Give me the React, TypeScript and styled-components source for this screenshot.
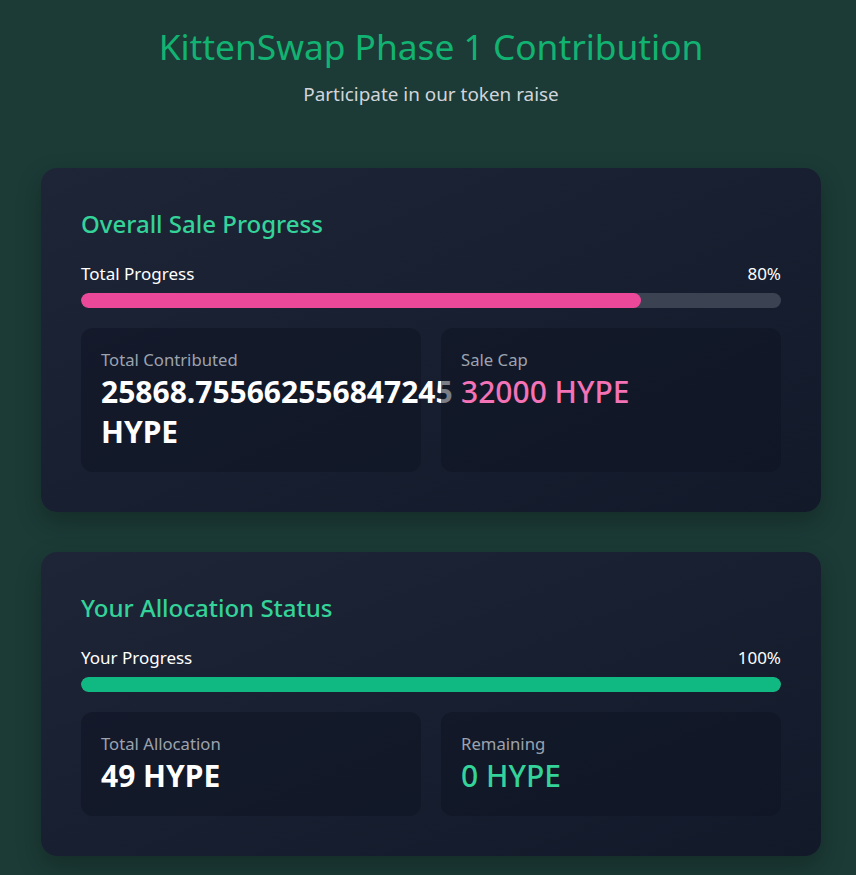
import React from "react";
import styled, { createGlobalStyle } from "styled-components";

const Global = createGlobalStyle`
  html, body { margin: 0; padding: 0; background: #1c3b36; }
  body { font-family: "Noto Sans", "Open Sans", sans-serif; color: #fff; }
  * { box-sizing: border-box; }
`;

const Page = styled.main`
  min-height: 875px;
  padding: 26px 35px 40px 41px;
`;

const Container = styled.div`
  width: 780px;
  display: flex;
  flex-direction: column;
`;

const Header = styled.header`
  text-align: center;
  margin-bottom: 60px;
`;

const Title = styled.h1`
  margin: 0 0 14px;
  font-size: 35.3px;
  line-height: 40px;
  font-weight: 400;
  color: #12b372;
`;

const Subtitle = styled.p`
  margin: 0;
  font-size: 18.9px;
  line-height: 28px;
  color: #d1d5db;
`;

const Cards = styled.div`
  display: flex;
  flex-direction: column;
  gap: 40px;
`;

const Card = styled.section`
  padding: 40px;
  border-radius: 16px;
  background: linear-gradient(to bottom right, #1e2537, #121929);
  box-shadow: 0 10px 25px rgba(0, 0, 0, 0.25);
`;

const CardTitle = styled.h2`
  margin: 0 0 20px;
  font-size: 24px;
  line-height: 32px;
  font-weight: 500;
  color: #34d399;
`;

const ProgressHead = styled.div`
  display: flex;
  justify-content: space-between;
  font-size: 17px;
  line-height: 28px;
  color: #fff;
  margin-bottom: 5px;
`;

const Track = styled.div`
  height: 15px;
  border-radius: 999px;
  background: #3b4252;
  overflow: hidden;
  margin-bottom: 20px;
`;

const Fill = styled.div<{ $color: string }>`
  height: 100%;
  border-radius: 999px;
  background: ${(p) => p.$color};
`;

const Stats = styled.div`
  display: grid;
  grid-template-columns: 1fr 1fr;
  gap: 20px;
`;

const StatBox = styled.div`
  padding: 20px;
  border-radius: 12px;
  background: rgba(15, 20, 34, 0.55);
  min-width: 0;
`;

const StatLabel = styled.div`
  font-size: 16.7px;
  line-height: 24px;
  color: #9ca3af;
`;

const StatValue = styled.div<{ $color: string }>`
  font-size: 30px;
  line-height: 40px;
  font-weight: 700;
  color: ${(p) => p.$color};
`;

const StatValueLight = styled(StatValue)`
  font-weight: 500;
`;

export default function App() {
  const progress = 80;
  return (
    <>
      <Global />
      <Page>
        <Container>
          <Header>
            <Title>KittenSwap Phase 1 Contribution</Title>
            <Subtitle>Participate in our token raise</Subtitle>
          </Header>
          <Cards>
            <Card>
              <CardTitle>Overall Sale Progress</CardTitle>
              <ProgressHead>
                <span>Total Progress</span>
                <span>{progress}%</span>
              </ProgressHead>
              <Track>
                <Fill $color="#ec4899" style={{ width: `${progress}%` }} />
              </Track>
              <Stats>
                <StatBox>
                  <StatLabel>Total Contributed</StatLabel>
                  <StatValue $color="#ffffff">25868.755662556847245 HYPE</StatValue>
                </StatBox>
                <StatBox>
                  <StatLabel>Sale Cap</StatLabel>
                  <StatValueLight $color="#f472b6">32000 HYPE</StatValueLight>
                </StatBox>
              </Stats>
            </Card>
            <Card>
              <CardTitle>Your Allocation Status</CardTitle>
              <ProgressHead>
                <span>Your Progress</span>
                <span>100%</span>
              </ProgressHead>
              <Track>
                <Fill $color="#10b981" style={{ width: "100%" }} />
              </Track>
              <Stats>
                <StatBox>
                  <StatLabel>Total Allocation</StatLabel>
                  <StatValue $color="#ffffff">49 HYPE</StatValue>
                </StatBox>
                <StatBox>
                  <StatLabel>Remaining</StatLabel>
                  <StatValueLight $color="#34d399">0 HYPE</StatValueLight>
                </StatBox>
              </Stats>
            </Card>
          </Cards>
        </Container>
      </Page>
    </>
  );
}
